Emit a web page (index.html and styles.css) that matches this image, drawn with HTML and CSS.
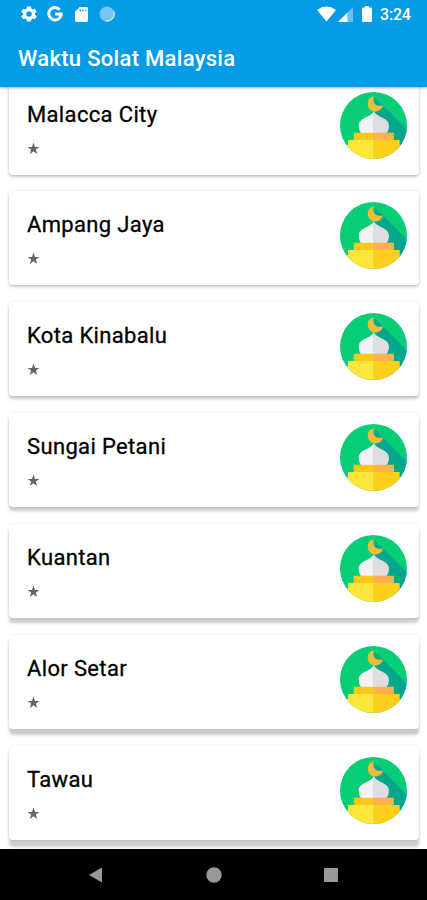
FILE: index.html
```html
<!DOCTYPE html>
<html lang="en">
<head>
<meta charset="utf-8">
<title>Waktu Solat Malaysia</title>
<link rel="stylesheet" href="styles.css">
</head>
<body>
<svg class="defs" width="0" height="0">
  <defs>
    <clipPath id="disc"><circle cx="100" cy="100" r="100"/></clipPath>
    <symbol id="mosque" viewBox="0 0 200 200">
      <g clip-path="url(#disc)">
        <rect width="200" height="200" fill="#06cd76"/>
        <path d="M104 16 L212 124 V170 H150 L100 120 V60Z" fill="#05a78c"/>
        <path d="M101 13C88 16 82 25 83 37C84 50 95 59 107 58C117 57 126 50 129 40C118 43 108 41 103 34C98 28 98 20 101 13Z" fill="#eebd3c"/>
        <path d="M101 57C95 76 56 76 56 100C56 111 59 118 64 124H101Z" fill="#f3f2f4"/>
        <path d="M101 57C107 76 146 76 146 100C146 111 143 118 138 124H101Z" fill="#dedde2"/>
        <path d="M41 122H101V146H41Z" fill="#ffc61b"/>
        <path d="M101 122H161V146H101Z" fill="#ffb04f"/>
        <path d="M24 143H101V200H0V159H24Z" fill="#ffe63b"/>
        <path d="M101 143H178V159H200V200H101Z" fill="#ffcf1c"/>
      </g>
    </symbol>
    <symbol id="star" viewBox="0 0 24 24">
      <path d="M12 1L14.800 9H23L16.400 14L18.800 22L12 17.200L5.200 22L7.600 14L1 9H9.200Z" fill="#666"/>
    </symbol>
  </defs>
</svg>
<div class="screen">
  <header class="top">
    <div class="status">
      <svg class="gear" viewBox="2 2 20 20"><path fill="#fff" fill-rule="evenodd" d="M19.400 13a7.500 7.500 0 0 0 0-2l2.300-1.700-2.300-4-2.700 1.100a7.500 7.500 0 0 0-1.700-1L14.600 2.500H9.400L9 5.400a7.500 7.500 0 0 0-1.700 1L4.600 5.300l-2.300 4L4.600 11a7.500 7.500 0 0 0 0 2l-2.300 1.700 2.300 4 2.700-1.100a7.500 7.500 0 0 0 1.700 1l.4 2.900h5.200l.4-2.900a7.500 7.500 0 0 0 1.700-1l2.700 1.100 2.300-4zM12 8.500a3.500 3.500 0 1 1 0 7a3.500 3.500 0 1 1 0-7z"/></svg>
      <svg class="google" viewBox="0 0 16 16"><path fill="none" stroke="#fff" stroke-width="2.900" d="M12.700 3.700A6.200 6.200 0 1 0 14.200 8H8.200"/></svg>
      <svg class="sd" viewBox="0 0 14 16"><path fill="#fff" fill-rule="evenodd" d="M5 0H12.500Q14 0 14 1.500V14.500Q14 16 12.500 16H1.500Q0 16 0 14.500V5ZM5 2.500V4.500H6.500V2.500ZM8 2.500V4.500H9.500V2.500ZM11 2.500V4.500H12.300V2.500Z"/></svg>
      <svg class="sync" viewBox="0 0 16 16"><circle cx="8" cy="8" r="7.500" fill="#72c6f2"/><path d="M14.500 5A7 7 0 0 1 6.500 14.800" fill="none" stroke="#c5e8fb" stroke-width="1.300"/></svg>
      <span class="spacer"></span>
      <svg class="wifi" viewBox="0 0 20 16"><path fill="#fff" d="M0 3.800Q10-3.500 20 3.800L10 16Z"/></svg>
      <svg class="cell" viewBox="0 0 16 16"><path fill="#68c1f1" d="M16 0V16H0Z"/><path fill="#fff" d="M10 6V16H0Z"/></svg>
      <svg class="battery" viewBox="0 0 10 16"><path fill="#fff" d="M3 0H7V1.600H9Q10 1.600 10 2.600V15Q10 16 9 16H1Q0 16 0 15V2.600Q0 1.600 1 1.600H3Z"/></svg>
      <span class="clock">3:24</span>
    </div>
    <h1 class="title">Waktu Solat Malaysia</h1>
  </header>
  <main class="list">
    <article class="card"><div class="info"><h2>Malacca City</h2><svg class="star"><use href="#star"/></svg></div><svg class="mosque"><use href="#mosque"/></svg></article>
    <article class="card"><div class="info"><h2>Ampang Jaya</h2><svg class="star"><use href="#star"/></svg></div><svg class="mosque"><use href="#mosque"/></svg></article>
    <article class="card"><div class="info"><h2>Kota Kinabalu</h2><svg class="star"><use href="#star"/></svg></div><svg class="mosque"><use href="#mosque"/></svg></article>
    <article class="card"><div class="info"><h2>Sungai Petani</h2><svg class="star"><use href="#star"/></svg></div><svg class="mosque"><use href="#mosque"/></svg></article>
    <article class="card"><div class="info"><h2>Kuantan</h2><svg class="star"><use href="#star"/></svg></div><svg class="mosque"><use href="#mosque"/></svg></article>
    <article class="card"><div class="info"><h2>Alor Setar</h2><svg class="star"><use href="#star"/></svg></div><svg class="mosque"><use href="#mosque"/></svg></article>
    <article class="card"><div class="info"><h2>Tawau</h2><svg class="star"><use href="#star"/></svg></div><svg class="mosque"><use href="#mosque"/></svg></article>
  </main>
  <nav class="nav">
    <svg viewBox="0 0 16 16"><path fill="#999" d="M14 .5V15.500L1 8Z"/></svg>
    <svg viewBox="0 0 16 16"><circle cx="8" cy="8" r="7.700" fill="#999"/></svg>
    <svg viewBox="0 0 16 16"><rect x="1" y="1" width="14" height="14" rx=".8" fill="#999"/></svg>
  </nav>
</div>
</body>
</html>
```
FILE: styles.css
```css
* { box-sizing: border-box; }
body { margin: 0; font-family: Roboto, sans-serif; background: #fff; }
svg { display: block; flex: none; }
.defs { position: absolute; }
.screen { display: flex; flex-direction: column; width: 427px; height: 900px; overflow: hidden; }

.top { flex: none; height: 87px; background: #059be5; color: #fff; z-index: 1; box-shadow: 0 1px 3px rgba(0, 0, 0, .3); }
.status { display: flex; align-items: center; height: 28px; padding: 0 16px 0 21px; }
.gear { width: 16px; height: 16px; }
.google { width: 16px; height: 16px; margin-left: 10px; }
.sd { width: 13px; height: 15px; margin-left: 12px; }
.sync { width: 16px; height: 16px; margin-left: 11px; }
.spacer { flex: 1; }
.wifi { width: 19px; height: 16px; }
.cell { width: 15px; height: 15px; margin-left: 2px; }
.battery { width: 10px; height: 16px; margin-left: 9px; }
.clock { margin-left: 8px; width: 31px; padding-top: 1px; font-size: 16px; font-weight: 500; line-height: 28px; letter-spacing: -.2px; white-space: nowrap; }
.title { margin: 0; padding: 18px 18px 0; font-size: 22px; font-weight: 500; line-height: 26px; letter-spacing: .3px; white-space: nowrap; }

.list { flex: none; height: 762px; overflow: hidden; padding: 0 8px 0 9px; }
.card {
  --drop: 2px;
  display: flex;
  justify-content: space-between;
  height: 94px;
  margin-bottom: 16.900px;
  padding: 11px 12px 0 18px;
  border-radius: 4px;
  background: #fff;
  box-shadow: 0 var(--drop) 3px rgba(0, 0, 0, .2), 0 0 3px rgba(0, 0, 0, .1);
}
.card:first-child { margin-top: -6.500px; }
.card:nth-child(3) { --drop: 3px; }
.card:nth-child(4) { --drop: 4px; }
.card:nth-child(5) { --drop: 5px; }
.card:nth-child(6) { --drop: 5.500px; }
.card:nth-child(7) { --drop: 6.500px; }
.info h2 { margin: 10px 0 0; font-size: 22px; font-weight: 400; line-height: 26px; letter-spacing: .35px; color: #000; -webkit-text-stroke: .3px #000; white-space: nowrap; }
.star { width: 13px; height: 13px; margin-top: 14px; }
.mosque { width: 67px; height: 67px; }

.nav { flex: 1; display: flex; align-items: center; justify-content: center; gap: 101.500px; background: #000; }
.nav svg { width: 16px; height: 16px; }
```
